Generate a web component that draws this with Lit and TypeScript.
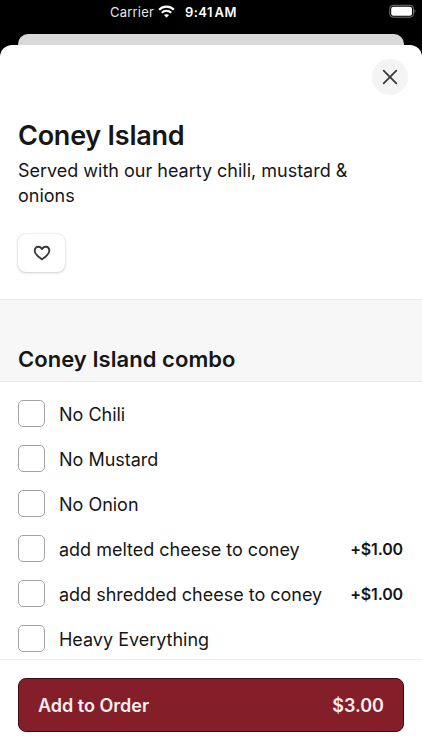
import { LitElement, html, css, svg } from "lit";
import { customElement } from "lit/decorators.js";

interface Option {
  name: string;
  price?: string;
}

const OPTIONS: Option[] = [
  { name: "No Chili" },
  { name: "No Mustard" },
  { name: "No Onion" },
  { name: "add melted cheese to coney", price: "+$1.00" },
  { name: "add shredded cheese to coney", price: "+$1.00" },
  { name: "Heavy Everything" },
];

@customElement("status-bar")
class StatusBar extends LitElement {
  static styles = css`
    :host {
      display: grid;
      grid-template-columns: 110px 1fr auto;
      align-items: center;
      height: 24px;
      padding-right: 6px;
      color: #fff;
      font-size: 13px;
      line-height: 16px;
    }
    .mid {
      grid-column: 2;
      display: flex;
      align-items: center;
      white-space: nowrap;
    }
    .carrier { width: 48px; letter-spacing: 0.2px; color: #e4e4e4; }
    .wifi { display: block; width: 17px; height: 13px; margin-top: -1px; }
    .time { margin-left: 10px; font-weight: 600; letter-spacing: 0.45px; word-spacing: -2.2px; }
    .battery { display: block; width: 27px; height: 14px; margin-top: -2px; }
  `;
  render() {
    return html`
      <div class="mid">
        <span class="carrier">Carrier</span>
        <svg class="wifi" viewBox="0 0 17 13" fill="none" stroke="#fff" stroke-width="2.2">
          ${svg`<path d="M1.1 4.7C5.2.6 11.8.6 15.9 4.7"/><path d="M3.8 7.7c2.6-2.6 6.8-2.6 9.4 0"/>
          <path d="M6 10.1c1.4-1.3 3.6-1.3 5 0L8.5 12.7z" fill="#fff" stroke="none"/>`}
        </svg>
        <span class="time">9:41 AM</span>
      </div>
      <svg class="battery" viewBox="0 0 27 14">
        <rect x=".7" y="1.3" width="23.8" height="11.9" rx="3.4" fill="none" stroke="#777" stroke-width="1"/>
        <rect x="2.2" y="2.8" width="20.8" height="8.9" rx="2" fill="#fff"/>
        <path d="M25.5 5.3c1.3.7 1.3 3.1 0 3.8z" fill="#777"/>
      </svg>
    `;
  }
}

@customElement("option-row")
class OptionRow extends LitElement {
  static properties = { name: {}, price: {} };
  declare name: string;
  declare price?: string;
  static styles = css`
    :host {
      display: flex;
      align-items: center;
      height: 45px;
      white-space: nowrap;
    }
    .box {
      box-sizing: border-box;
      width: 27px;
      height: 27px;
      border: 1px solid #a3a3a3;
      border-radius: 5px;
      background: #fff;
    }
    .name { flex: 1; margin-left: 14px; padding-top: 2px; font-size: 18px; line-height: 24px; letter-spacing: -0.01px; }
    .price { font-size: 16px; font-weight: 600; line-height: 24px; letter-spacing: -0.15px; }
  `;
  render() {
    return html`
      <span class="box"></span>
      <span class="name">${this.name}</span>
      ${this.price ? html`<span class="price">${this.price}</span>` : ""}
    `;
  }
}

@customElement("app-root")
class AppRoot extends LitElement {
  static styles = css`
    :host {
      display: flex;
      flex-direction: column;
      height: 750px;
      overflow: hidden;
      background: #000;
      color: #161616;
      font-family: Inter, "Liberation Sans", sans-serif;
    }
    .behind {
      flex: none;
      height: 11px;
      margin: 10px 18px 0;
      border-radius: 10px 10px 0 0;
      background: #d9d9d9;
    }
    .sheet {
      flex: 1;
      min-height: 0;
      display: flex;
      flex-direction: column;
      border-radius: 12px 12px 0 0;
      background: #fff;
    }
    .intro {
      box-sizing: border-box;
      flex: none;
      height: 254px;
      padding: 14px 14px 0 18px;
      display: flex;
      flex-direction: column;
      align-items: flex-start;
    }
    .close {
      align-self: flex-end;
      display: grid;
      place-items: center;
      width: 36px;
      height: 36px;
      border-radius: 50%;
      background: #f4f4f4;
    }
    .close svg { width: 16px; height: 16px; margin-top: -1px; }
    h1, h2, p { margin: 0; white-space: nowrap; }
    h1 { margin-top: 24px; font-size: 27px; font-weight: 600; line-height: 34px; letter-spacing: -0.24px; }
    p { margin-top: 5px; font-size: 18px; line-height: 25px; letter-spacing: -0.01px; }
    .like {
      box-sizing: border-box;
      display: grid;
      place-items: center;
      width: 47px;
      height: 38px;
      margin-top: 26px;
      border-radius: 8px;
      background: #fff;
      box-shadow: 0 0 2px rgba(0, 0, 0, 0.14), 0 1px 3px rgba(0, 0, 0, 0.16);
    }
    .like svg { width: 18px; height: 16px; }
    .group {
      box-sizing: border-box;
      flex: none;
      height: 83px;
      padding: 45px 18px 0;
      border-top: 1px solid #eee;
      border-bottom: 1px solid #e9e9e9;
      background: #f7f7f7;
    }
    h2 { font-size: 22px; font-weight: 600; line-height: 28px; letter-spacing: 0.05px; }
    .options {
      flex: 1;
      min-height: 0;
      overflow: hidden;
      padding: 9px 19px 0 18px;
    }
    .footer {
      flex: none;
      box-sizing: border-box;
      height: 90px;
      padding: 18px 18px 0;
      background: #fff;
      box-shadow: 0 0 2px rgba(0, 0, 0, 0.2);
      z-index: 1;
    }
    .order {
      box-sizing: border-box;
      display: flex;
      justify-content: space-between;
      align-items: center;
      height: 54px;
      padding: 2px 19px 0;
      border: 1px solid #3c0b14;
      border-radius: 8px;
      background: #841f2a;
      color: #faeff0;
      font-size: 18px;
      font-weight: 600;
      line-height: 24px;
    }
  `;
  render() {
    return html`
      <status-bar></status-bar>
      <div class="behind"></div>
      <main class="sheet">
        <section class="intro">
          <div class="close">
            <svg viewBox="0 0 16 16" fill="none" stroke="#3a3a3a" stroke-width="1.8" stroke-linecap="round">
              <path d="M1.7 1.7 14.3 14.3M14.3 1.7 1.7 14.3"/>
            </svg>
          </div>
          <h1>Coney Island</h1>
          <p>Served with our hearty chili, mustard &amp;<br />onions</p>
          <div class="like">
            <svg viewBox="0 0 18 16" fill="none" stroke="#3a3a3a" stroke-width="1.9" stroke-linejoin="round">
              <path d="M9 14.4C6 12.3 1.7 9.5 1.7 5.7 1.7 3.3 3.3 1.7 5.3 1.7 7 1.7 8.3 2.6 9 4.1 9.7 2.6 11 1.7 12.7 1.7c2 0 3.6 1.6 3.6 4C16.3 9.500 12 12.300 9 14.400z"/>
            </svg>
          </div>
        </section>
        <section class="group"><h2>Coney Island combo</h2></section>
        <section class="options">
          ${OPTIONS.map((o) => html`<option-row .name=${o.name} .price=${o.price}></option-row>`)}
        </section>
        <footer class="footer">
          <div class="order"><span>Add to Order</span><span>$3.00</span></div>
        </footer>
      </main>
    `;
  }
}
